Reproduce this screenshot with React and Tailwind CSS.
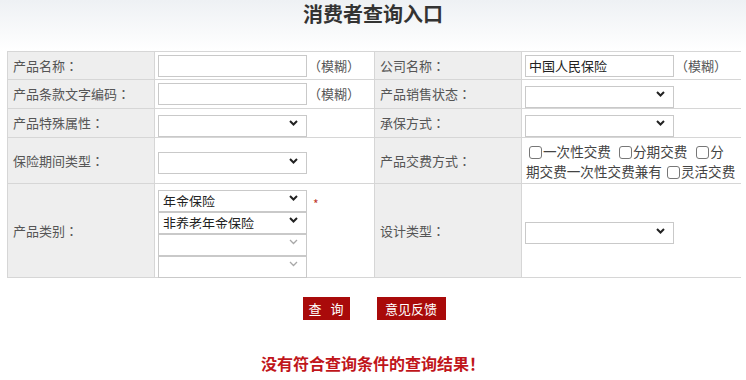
import React from 'react';

const font = { fontFamily: '"Noto Sans CJK SC", "Noto Sans", sans-serif' };
const tc = { fontFamily: '"Noto Sans CJK TC", "Noto Sans CJK SC", sans-serif' };

const Chevron = ({ light }) => (
    <svg width="9" height="6" viewBox="0 0 9 6" className="absolute right-[9px] top-1/2 -translate-y-1/2 pointer-events-none">
        <polyline points="1,1 4.5,4.5 8,1" fill="none" stroke={light ? '#a8a8a8' : '#222'} strokeWidth={light ? 1.3 : 2} />
    </svg>
);

const Select = ({ value = '', light = false }) => (
    <div className="relative w-[149px] h-[22px] shrink-0">
        <select
            defaultValue={value}
            disabled={light}
            className="appearance-none w-full h-full border border-[#c9c9c9] bg-white pl-[4px] text-[13px] text-[#222] leading-none outline-none"
        >
            <option value={value}>{value}</option>
        </select>
        <Chevron light={light} />
    </div>
);

const TextInput = ({ value = '' }) => (
    <input
        type="text"
        defaultValue={value}
        className="w-[149px] h-[22px] border border-[#c9c9c9] bg-white px-[3px] text-[13px] text-[#222] outline-none"
    />
);

// label text with a centred full-width colon, like the original page
const Label = ({ text }) => (
    <div className="bg-[#eeeeee] flex items-center pl-[5px] text-[13px] text-[#555]">
        {text}<span style={tc}>：</span>
    </div>
);

const Cell = ({ children, className = '' }) => (
    <div className={`bg-white flex items-center pl-[3px] ${className}`}>{children}</div>
);

const Fuzzy = () => (
    <span className="ml-[1px] text-[13px] text-[#555] whitespace-nowrap" style={tc}>（模糊）</span>
);

const Box = () => (
    <input
        type="checkbox"
        className="appearance-none inline-block align-[-2px] w-[13px] h-[13px] border border-[#777] rounded-[3px] bg-white ml-[3px] mr-[1px]"
    />
);

const Gap = ({ w }) => <span className={`inline-block ${w}`} />;

export default function App() {
    return (
        <div className="w-[746px] h-[380px] bg-white overflow-hidden" style={font}>
            <div className="h-[51px] bg-gradient-to-b from-[#eef1f4] to-white pt-[1px]">
                <h1 className="text-center text-[20px] font-bold text-[#333] leading-[26px]">消费者查询入口</h1>
            </div>

            <div className="ml-[7px] w-[734px] grid grid-cols-[146px_219px_146px_219px] grid-rows-[27px_28px_28px_45px_93px] gap-px bg-[#d6d6d6] p-px">
                <Label text="产品名称" />
                <Cell><TextInput /><Fuzzy /></Cell>
                <Label text="公司名称" />
                <Cell><TextInput value="中国人民保险" /><Fuzzy /></Cell>

                <Label text="产品条款文字编码" />
                <Cell><TextInput /><Fuzzy /></Cell>
                <Label text="产品销售状态" />
                <Cell><Select /></Cell>

                <Label text="产品特殊属性" />
                <Cell><Select /></Cell>
                <Label text="承保方式" />
                <Cell><Select /></Cell>

                <Label text="保险期间类型" />
                <Cell><Select /></Cell>
                <Label text="产品交费方式" />
                <div className="bg-white pl-[4px] pt-[3px] text-[13.6px] leading-[20px] text-[#444]">
                    <div className="whitespace-nowrap">
                        <Box />一次性交费<Gap w="w-[5px]" /><Box />分期交费<Gap w="w-[6px]" /><Box />分
                    </div>
                    <div className="whitespace-nowrap">
                        期交费一次性交费兼有<Gap w="w-[2px]" /><Box />灵活交费
                    </div>
                </div>

                <Label text="产品类别" />
                <div className="bg-white pl-[3px] pt-[3px] flex items-start">
                    <div className="flex flex-col">
                        <Select value="年金保险" />
                        <Select value="非养老年金保险" />
                        <Select light />
                        <Select light />
                    </div>
                    <span className="ml-[6px] mt-[11px] text-[12px] leading-none text-[#c0392b]">*</span>
                </div>
                <Label text="设计类型" />
                <Cell><Select /></Cell>
            </div>

            <div className="flex justify-center gap-[27px] mt-[19px] pl-[2px]">
                <button className="w-[47px] h-[23px] bg-[#a90a0a] text-white text-[13px] tracking-[3px] pl-[3px]">查 询</button>
                <button className="w-[69px] h-[23px] bg-[#a90a0a] text-white text-[13px]">意见反馈</button>
            </div>

            <p className="text-center mt-[33px] text-[16px] font-bold text-[#c0151a] leading-[20px]">没有符合查询条件的查询结果！</p>
        </div>
    );
}
